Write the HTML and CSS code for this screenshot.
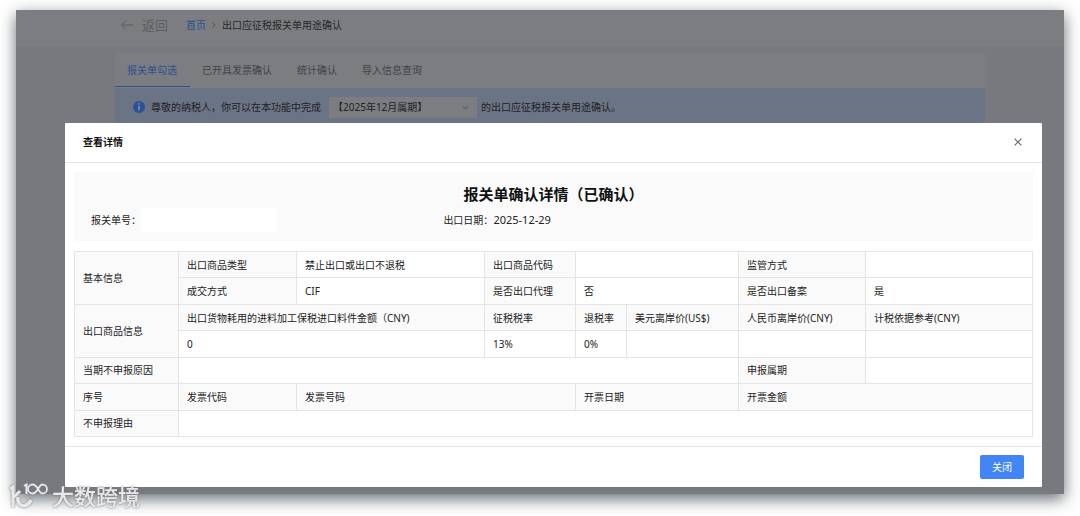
FILE: index.html
```html
<!DOCTYPE html>
<html lang="zh-CN">
<head>
<meta charset="utf-8">
<title>出口应征税报关单用途确认</title>
<link rel="stylesheet" href="styles.css">
</head>
<body>
<div class="frame">
  <main class="page">
    <header class="topbar">
      <a class="back" href="#">
        <svg width="14" height="12" viewBox="0 0 14 12" fill="none" stroke="currentColor"><path d="M13 6H1.5M6 1.5L1.5 6L6 10.5"/></svg>
        返回
      </a>
      <nav class="crumbs">
        <a class="home" href="#">首页</a>
        <svg width="4" height="6" viewBox="0 0 4 6" fill="none" stroke="currentColor"><path d="M.5 .5L3 3L.5 5.5"/></svg>
        <span>出口应征税报关单用途确认</span>
      </nav>
    </header>
    <section class="card">
      <nav class="tabs">
        <a class="tab active" href="#">报关单勾选</a>
        <a class="tab" href="#">已开具发票确认</a>
        <a class="tab" href="#">统计确认</a>
        <a class="tab" href="#">导入信息查询</a>
      </nav>
      <div class="notice">
        <svg class="info" width="12" height="12" viewBox="0 0 12 12"><circle cx="6" cy="6" r="6" fill="#2a5095"/><path d="M6 2.3V3.8M6 5V9.6" stroke="#8c93a3" stroke-width="1.5"/></svg>
        <label class="lead" for="period">尊敬的纳税人，你可以在本功能中完成</label>
        <span class="picker">
          <select id="period"><option>【2025年12月属期】</option></select>
          <svg class="chevron" width="7" height="5" viewBox="0 0 7 5" fill="none" stroke="currentColor"><path d="M.5 .8L3.5 3.8L6.5 .8"/></svg>
        </span>
        <span>的出口应征税报关单用途确认。</span>
      </div>
    </section>
  </main>

  <div class="layer">
    <section class="modal" role="dialog" aria-labelledby="dialog-title">
      <header class="modal-head">
        <h1 id="dialog-title">查看详情</h1>
        <button class="close" type="button" aria-label="关闭窗口">
          <svg width="8" height="8" viewBox="0 0 8 8" stroke="currentColor" stroke-width="1.2"><path d="M.6 .6L7.4 7.4M7.4 .6L.6 7.4"/></svg>
        </button>
      </header>
      <div class="modal-body">
        <div class="summary">
          <h2>报关单确认详情（已确认）</h2>
          <div class="facts">
            <div class="fact">报关单号：<span class="blank"></span></div>
            <div class="fact">出口日期：<span class="date">2025-12-29</span></div>
          </div>
        </div>
        <table class="detail">
          <colgroup><col class="c1"><col class="c2"><col class="c3"><col class="c4"><col class="c5"><col class="c6"><col class="c7"><col></colgroup>
          <tbody>
            <tr><th rowspan="2">基本信息</th><th>出口商品类型</th><td>禁止出口或出口不退税</td><th>出口商品代码</th><td colspan="2"></td><th>监管方式</th><td></td></tr>
            <tr><th>成交方式</th><td>CIF</td><th>是否出口代理</th><td colspan="2">否</td><th>是否出口备案</th><td>是</td></tr>
            <tr><th rowspan="2">出口商品信息</th><th colspan="2">出口货物耗用的进料加工保税进口料件金额（CNY)</th><th>征税税率</th><th>退税率</th><th>美元离岸价(US$)</th><th>人民币离岸价(CNY)</th><th>计税依据参考(CNY)</th></tr>
            <tr><td colspan="2">0</td><td>13%</td><td>0%</td><td></td><td></td><td></td></tr>
            <tr><th>当期不申报原因</th><td colspan="5"></td><th>申报属期</th><td></td></tr>
            <tr><th>序号</th><th>发票代码</th><th colspan="2">发票号码</th><th colspan="2">开票日期</th><th colspan="2">开票金额</th></tr>
            <tr><th>不申报理由</th><td colspan="7"></td></tr>
          </tbody>
        </table>
      </div>
      <footer class="modal-foot"><button class="primary" type="button">关闭</button></footer>
    </section>
  </div>
</div>

<div class="watermark">
  <svg width="40" height="28" viewBox="0 0 40 28" fill="none" stroke="currentColor">
    <path d="M2 7L5 5V25M5 16L12 9" stroke-width="3"/>
    <path d="M10 15C9 21 13 24.500 17 23.500Q21 22.500 23 18" stroke-width="3.500"/>
    <path d="M16 4L18.500 2.500V12" stroke-width="2"/>
    <path d="M30 7C28 3.500 26.500 2.500 24.500 2.500A4.500 4.500 0 0 0 24.500 11.500C26.500 11.500 28 10.500 30 7C32 3.500 33 2.500 34.500 2.500A4.500 4.500 0 0 1 34.500 11.500C33 11.500 32 10.500 30 7Z" stroke-width="1.800"/>
  </svg>
  <span>大数跨境</span>
</div>
</body>
</html>
```
FILE: styles.css
```css
* { box-sizing: border-box; }

body {
  margin: 0;
  position: relative;
  min-height: 100vh;
  overflow-x: hidden;
  background: #fff;
  color: #222;
  font: 10px/16px "Noto Sans", "Noto Sans CJK SC", sans-serif;
}

a { color: inherit; text-decoration: none; }
h1, h2 { margin: 0; }
button, select { font: inherit; }
svg { flex: none; }

.frame {
  display: grid;
  margin: 10px 16px 0;
  background: #78797e;
  box-shadow: 0 5px 15px rgba(50, 60, 65, .75);
}

.page, .layer { grid-area: 1 / 1; min-width: 0; }

.topbar {
  display: flex;
  align-items: center;
  gap: 18px;
  height: 37px;
  padding: 0 104px 8px;
  background: #7c7d80;
}

.back {
  display: flex;
  align-items: center;
  gap: 8px;
  color: #5c5d61;
  font-size: 13px;
}

.crumbs {
  display: flex;
  align-items: center;
  gap: 6px;
  color: #26272a;
}

.home { color: #2a5095; }
.crumbs svg { color: #505155; }

.card { margin: 6px 79px 0 99px; background: #7c7d80; }

.tabs { display: flex; height: 35px; color: #414246; }

.tab { height: 34px; padding: 9px 13px 0 12px; }
.tab.active { color: #2a5095; border-bottom: 1px solid #2a5095; }

.notice {
  display: flex;
  align-items: center;
  height: 38px;
  padding: 0 18px;
  background: #6b7484;
  color: #202226;
}

.lead { width: 178px; margin-left: 6px; }

.picker {
  display: flex;
  align-items: center;
  width: 148px;
  margin-right: 4px;
  padding-right: 8px;
  background: #7c7d80;
}

.picker select {
  flex: 1;
  height: 21px;
  padding: 0 4px;
  border: 0;
  background: transparent;
  color: inherit;
  appearance: none;
}

.chevron { color: #505155; }

.layer { padding: 113px 22px 7px 49px; }

.modal { background: #fff; border-radius: 1px; }

.modal-head {
  display: flex;
  align-items: center;
  justify-content: space-between;
  height: 40px;
  padding: 0 18px 1px;
  border-bottom: 1px solid #e4e4e4;
}

.modal-head h1 { font-size: 10px; line-height: 16px; color: #111; }

.close {
  display: flex;
  padding: 2px;
  border: 0;
  background: none;
  color: #666;
}

.modal-body { padding: 9px; }

.summary {
  margin-bottom: 9px;
  padding: 10px 17px;
  background: #fafafa;
}

.summary h2 {
  padding-bottom: 2px;
  color: #111;
  font-size: 15px;
  line-height: 24px;
  text-align: center;
}

.facts { display: grid; grid-template-columns: 8fr 13fr; }
.fact { display: flex; align-items: center; height: 24px; }
.blank { width: 136px; height: 24px; background: #fff; }
.date { font-size: 11px; }

.detail {
  width: 100%;
  height: 186px;
  table-layout: fixed;
  border-collapse: collapse;
}

.detail th, .detail td {
  padding: 0 8px;
  border: 1px solid #e4e4e4;
  font-weight: 400;
  text-align: left;
  white-space: nowrap;
}

.detail th { background: #fafafa; }

.c1 { width: 104px; }
.c2 { width: 118px; }
.c3 { width: 188px; }
.c4 { width: 91px; }
.c5 { width: 51px; }
.c6 { width: 112px; }
.c7 { width: 127px; }

.modal-foot {
  display: flex;
  justify-content: flex-end;
  padding: 8px 18px;
  border-top: 1px solid #e4e4e4;
}

.primary {
  height: 24px;
  padding: 0 12px;
  border: 0;
  border-radius: 2px;
  background: #4285f4;
  color: #fff;
}

.watermark {
  position: absolute;
  left: 8px;
  bottom: 5px;
  display: flex;
  align-items: center;
  gap: 4px;
  color: #e8e8ea;
  font-size: 22px;
  font-weight: 500;
  line-height: 30px;
  filter: drop-shadow(0 0 1px #777);
}
```
